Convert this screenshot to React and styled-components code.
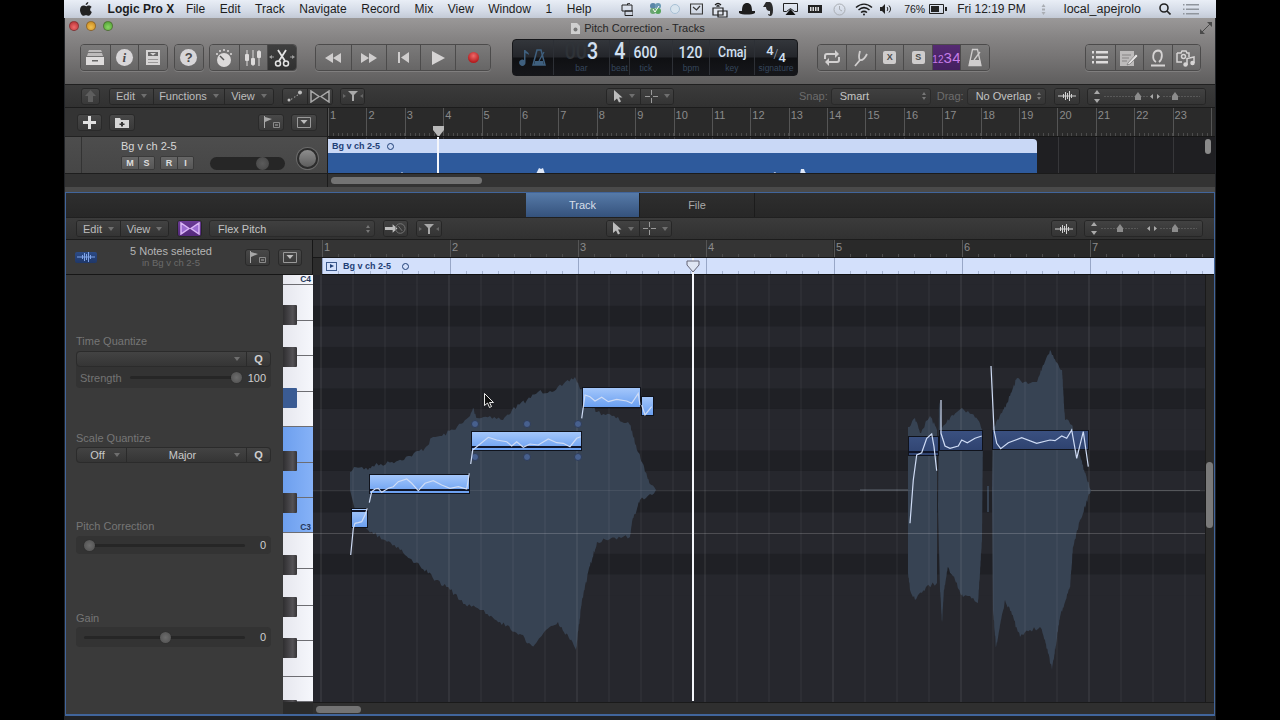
import React from 'react';
import styled, { createGlobalStyle } from 'styled-components';

const Global = createGlobalStyle`
  html, body { margin: 0; padding: 0; background: #000; overflow: hidden; }
  * { box-sizing: border-box; }
  body { font-family: "Liberation Sans", Arial, sans-serif; }
`;

/* ---------- page shell ---------- */
const Desktop = styled.div`
  width: 1152px; height: 720px; margin-left: 64px; background: #202226;
  display: flex; flex-direction: column; overflow: hidden;
`;
const MenuBar = styled.div`
  height: 18px; flex: none; display: flex; align-items: center; padding: 0 17px 0 16px; gap: 14.6px;
  background: linear-gradient(#e9eef6, #d4dbe7 60%, #c3cad6); color: #1c1c1c; font-size: 12px;
`;
const MenuTitle = styled.span`font-weight: 700; margin: 0 -3px 0 1px; font-size: 12px;`;
const Status = styled.div`margin-left: auto; display: flex; align-items: center;`;
const StatusText = styled.span`
  margin-left: ${p => p.$ml || 0}px; font-size: ${p => p.$size || 12}px; color: #222; white-space: nowrap;
`;
const Ico = styled.svg`display: block; flex: none; margin-left: ${p => p.$ml || 0}px;`;

const WindowTop = styled.div`
  height: 66px; flex: none; margin-left: 1px; margin-right: 1px;
  background: linear-gradient(#9a9898, #868484 30%, #767474 60%, #5f5e5e);
`;
const TitleBar = styled.div`height: 20px; position: relative; display: flex; align-items: center; justify-content: center; gap: 4px; padding-right: 4px; color: #262626; font-size: 11px;`;
const Lights = styled.div`position: absolute; left: 4px; top: 3px; display: flex; gap: 7px;`;
const Light = styled.span`
  width: 10px; height: 10px; border-radius: 50%; background: radial-gradient(circle at 50% 65%, ${p => p.$c}, ${p => p.$d});
  border: 1px solid rgba(60, 40, 40, .45);
`;
const Expand = styled(Ico)`position: absolute; right: 3px; top: 4px;`;
const Toolbar = styled.div`display: flex; align-items: flex-start; padding: 6px 14px 0 15px; height: 46px;`;
const Group = styled.div`
  display: flex; height: 27px; margin-left: ${p => p.$auto ? 'auto' : (p.$ml || 0) + 'px'}; border-radius: 4px; overflow: hidden;
  border: 1px solid #4c4b4b; box-shadow: 0 1px 0 rgba(255, 255, 255, .15);
`;
const ToolBtn = styled.div`
  width: ${p => p.$w || 28.5}px; display: flex; align-items: center; justify-content: center;
  background: ${p => p.$purple ? 'linear-gradient(#552a72, #43205f)' : p.$on ? 'linear-gradient(#3e3e3e, #303030)' : 'linear-gradient(#7b7a7a, #676666)'};
  & + & { border-left: 1px solid #4c4b4b; }
`;
const Disc = styled.span`
  width: 17px; height: 17px; border-radius: 50%; background: #d8d6d8; color: #4a484a; font: italic 700 13px/17px "Liberation Serif", serif; text-align: center;
`;
const DiscPlain = styled(Disc)`font: 700 13px/17px "Liberation Sans", sans-serif;`;
const Badge = styled.span`
  width: 13px; height: 13px; border-radius: 2px; background: #cfcdcd; color: #4d4d4d; font: 700 9px/13px "Liberation Sans", sans-serif; text-align: center;
`;
const CountIn = styled.span`color: #c67ce8; font-size: 10px; white-space: nowrap; b { font-weight: 400; font-size: 15px; letter-spacing: .5px; }`;
const RecordDot = styled.span`width: 11px; height: 11px; border-radius: 50%; background: radial-gradient(circle at 50% 35%, #f06a6a, #b51e20 70%);`;

/* ---------- LCD ---------- */
const Lcd = styled.div`
  width: 286px; height: 37px; margin: -5px 0 0 21px; display: flex; border-radius: 4px; border: 1px solid #16171a;
  background: linear-gradient(#33363b, #24262b 48%, #0f1013 52%, #15161a); color: #d2e0f2;
`;
const LcdCell = styled.div`
  width: ${p => p.$w}px; display: flex; flex-direction: column; align-items: center; justify-content: ${p => p.$center ? 'center' : 'flex-end'};
  padding: 0 ${p => p.$pr || 0}px ${p => p.$center ? 0 : 2}px 0;
  & + & { border-left: ${p => p.$flat ? 0 : 1}px solid #2d3036; }
`;
const LcdValue = styled.div`
  font: 500 ${p => p.$size || 17}px/${p => p.$size || 17}px Roboto, sans-serif; transform: scaleX(.82); white-space: nowrap; margin-bottom: ${p => p.$mb || 1}px;
  i { font-style: normal; color: #2f3338; }
`;
const Signature = styled.div`
  display: flex; height: 22px; align-items: center; font: 500 13px/13px Roboto, sans-serif; margin-bottom: -1px;
  span:first-child { transform: translateY(-4px); }
  span:last-child { transform: translateY(3px); }
  em { font-style: normal; font-weight: 300; font-size: 12px; color: #9fb0c6; }
`;
const LcdLabel = styled.div`font-size: 8.5px; line-height: 9px; color: #36475c;`;

/* ---------- dark bars ---------- */
const DarkBar = styled.div`
  height: ${p => p.$h || 24}px; flex: none; display: flex; align-items: center; padding-left: ${p => p.$pl || 0}px;
  background: linear-gradient(#3b3b3b, #313131); border-top: 1px solid #202020; border-bottom: 1px solid #1c1c1c;
`;
const BarGroup = styled.div`
  display: flex; flex: none; height: 17px; margin-left: ${p => p.$ml || 0}px; border-radius: 3px; overflow: hidden; border: 1px solid #262626;
`;
const BarBtn = styled.div`
  width: ${p => p.$w}px; display: flex; align-items: center; justify-content: center; gap: 6px; font-size: 11px; color: #bdbdbd;
  background: ${p => p.$purple ? 'linear-gradient(#6b3a96, #53297a)' : 'linear-gradient(#424242, #343434)'};
  & + & { border-left: 1px solid #262626; }
`;
const Caret = styled.span`
  width: 0; height: 0; border-left: 3px solid transparent; border-right: 3px solid transparent; border-top: 4px solid #6f6f6f;
`;
const Dim = styled.span`font-size: 11px; color: #6d6d6d; margin-left: ${p => p.$ml || 0}px;`;
const Select = styled.div`
  width: ${p => p.$w}px; flex: none; height: 17px; margin-left: ${p => p.$ml || 0}px; display: flex; align-items: center; justify-content: space-between;
  padding: 0 4px 0 8px; border-radius: 3px; border: 1px solid #2a2a2a; background: linear-gradient(#404040, #353535); font-size: 11px; color: #c4c4c4;
`;
const Stepper = styled.span`
  display: flex; flex-direction: column; gap: 2px;
  &::before, &::after { content: ''; width: 0; height: 0; border-left: 2.5px solid transparent; border-right: 2.5px solid transparent; }
  &::before { border-bottom: 3px solid #777; }
  &::after { border-top: 3px solid #777; }
`;

/* ---------- track pane ---------- */
const TrackPane = styled.div`height: 103px; flex: none; margin: 0 1px; background: #2b2b2b; display: flex; flex-direction: column;`;
const TrackGrid = styled.div`display: grid; grid-template-columns: 263px 1fr; grid-template-rows: 29px 37px 13px;`;
const HeaderTools = styled.div`display: flex; align-items: center; padding-left: 12px; background: #343434; border-right: 1px solid #1c1c1c; border-bottom: 1px solid #222;`;
const SquareBtn = styled.div`
  width: ${p => p.$w || 25}px; height: 17px; margin-left: ${p => p.$ml || 0}px; display: flex; align-items: center; justify-content: center;
  border-radius: 3px; border: 1px solid #2a2a2a; background: linear-gradient(#484848, #393939); flex: none;
`;
const RulerStrip = styled.div`
  display: flex; overflow: hidden; position: relative; padding-left: ${p => p.$pl || 0}px; min-width: 0;
  ${p => p.$h ? `height: ${p.$h}px; flex: none;` : ''}
  background: ${p => p.$bg || '#2a2a2a'}; border-bottom: 1px solid #171717;
`;
const Bar = styled.div`
  width: ${p => p.$w}px; flex: none; border-left: 1px solid #555; color: #8b8b8b; font-size: 11px; padding: 1px 0 0 1px; line-height: 12px;
  background: repeating-linear-gradient(90deg, transparent 0 ${p => p.$w / 8 - 1}px, #4b4b4b ${p => p.$w / 8 - 1}px ${p => p.$w / 8}px) 0 100% / 100% 3px no-repeat;
`;
const Lamp = styled.div`
  position: absolute; left: ${p => p.$x}px; top: ${p => p.$y}px; pointer-events: none;
`;
const TrackHead = styled.div`
  display: flex; background: linear-gradient(#4d4d4d, #464646); border-right: 1px solid #1c1c1c; border-bottom: 1px solid #1e1e1e;
`;
const TrackIconSlot = styled.div`width: 17px; border-right: 1px solid #333;`;
const TrackMain = styled.div`flex: 1; display: flex; align-items: flex-end; padding: 0 0 3px 39px; position: relative;`;
const TrackName = styled.div`position: absolute; left: 39px; top: 3px; font-size: 11px; color: #d8d8d8;`;
const MiniGroup = styled.div`display: flex; height: 14px; margin-left: ${p => p.$ml || 0}px; border-radius: 2px; border: 1px solid #3a3a3a; overflow: hidden;`;
const MiniBtn = styled.span`
  width: 16px; display: flex; align-items: center; justify-content: center; font: 700 9px "Liberation Sans", sans-serif; color: #dedede;
  background: linear-gradient(#676767, #565656);
  & + & { border-left: 1px solid #3a3a3a; }
`;
const Volume = styled.div`
  width: 75px; height: 13px; margin-left: 16px; border-radius: 7px; background: #262626; position: relative;
  &::after { content: ''; position: absolute; left: 46px; top: 0; width: 13px; height: 13px; border-radius: 50%; background: radial-gradient(#5b5b5b, #444); }
`;
const Pan = styled.div`
  width: 21px; height: 21px; margin: 0 0 1px 12px; border-radius: 50%; border: 2px solid #2c2c2c; background: linear-gradient(#8d8d8d, #5d5d5d);
  box-shadow: 0 0 0 1px #6a6a6a;
`;
const Lane = styled.div`
  position: relative; overflow: hidden; background: #1f1f22; padding-top: 2px; border-bottom: 1px solid #1b1b1b;
  background-image: repeating-linear-gradient(90deg, #37373a 0 1px, transparent 1px 38.4px);
  background-size: 875px 100%; background-repeat: no-repeat;
`;
const Region = styled.div`width: 709px; height: 35px; border-radius: 0 4px 0 0; overflow: hidden; display: flex; flex-direction: column;`;
const RegionHead = styled.div`
  height: 14px; flex: none; background: #c9d8f6; display: flex; align-items: center; gap: 7px; padding-left: 4px; font-size: 9px; font-weight: 700; color: #1f3f76;
`;
const Ring = styled.span`width: 7px; height: 7px; border-radius: 50%; border: 1px solid #1f3f76; margin-left: ${p => p.$ml || 0}px;`;
const RegionBody = styled.div`flex: 1; background: #2e5a9c;`;
const LaneThumb = styled.div`position: absolute; left: 877px; top: 2px; width: 6px; height: 15px; border-radius: 3px; background: #8a8a8a;`;
const PlayLine = styled.div`position: absolute; left: ${p => p.$x}px; top: ${p => p.$top}px; bottom: ${p => p.$bottom}px; width: 2px; background: #f4f6fb;`;
const ScrollCorner = styled.div`background: #333; border-right: 1px solid #1c1c1c;`;
const ScrollTrack = styled.div`background: #333; padding: 3px 0 0 3px;`;
const Thumb = styled.div`width: ${p => p.$w}px; height: 7px; border-radius: 4px; background: #737373;`;
const Divider = styled.div`height: 5px; flex: none; margin: 0 1px; background: #4a4a4a;`;

/* ---------- editor pane ---------- */
const Editor = styled.div`
  height: 524px; flex: none; margin: 0 1px; display: flex; flex-direction: column; border: 1px solid #41659b; border-bottom-width: 2px; background: #2c2c2c;
`;
const Tabs = styled.div`height: 24px; flex: none; display: flex; padding-left: 460px; background: linear-gradient(#2e2e2e, #272727);`;
const Tab = styled.div`
  width: ${p => p.$w}px; display: flex; align-items: center; justify-content: center; font-size: 11px; border-right: 1px solid #1c1c1c;
  color: ${p => p.$on ? '#d7dfe9' : '#a9a9a9'};
  background: ${p => p.$on ? 'linear-gradient(#567aa8, #35527c)' : 'transparent'};
`;
const EditorBody = styled.div`flex: 1; display: flex; min-height: 0;`;
const LeftCol = styled.div`width: 247px; flex: none; display: flex; flex-direction: column; border-right: 1px solid #161616;`;
const InspectorHead = styled.div`
  height: 35px; flex: none; display: flex; align-items: center; padding-left: 9px; background: #3a3a3a; border-bottom: 1px solid #161616;
`;
const BlueChip = styled.div`
  width: 22px; height: 11px; border-radius: 2px; display: flex; align-items: center; justify-content: center; background: linear-gradient(#2c4b86, #1f3768);
`;
const Selected = styled.div`width: 148px; text-align: center; font-size: 11px; line-height: 12px; color: #b5b5b5; small { display: block; font-size: 9.5px; color: #6b6b6b; }`;
const LeftBottom = styled.div`flex: 1; display: flex; min-height: 0;`;
const Inspector = styled.div`width: 217px; flex: none; padding-left: 10px; background: #3a3a3a; color: #767676; font-size: 11px;`;
const SectionLabel = styled.div`height: 12px; line-height: 12px; margin-top: ${p => p.$top}px; margin-bottom: ${p => p.$gap}px;`;
const Panel = styled.div`width: 195px; border-radius: 4px; background: #333;`;
const SelectRow = styled.div`
  display: flex; height: 16px; border-radius: 4px; overflow: hidden; border: 1px solid #2b2b2b; background: linear-gradient(#434343, #353535); color: #c9c9c9; font-size: 11px;
`;
const SelectCell = styled.div`
  flex: ${p => p.$flex || 'none'}; width: ${p => p.$w ? p.$w + 'px' : 'auto'}; display: flex; align-items: center; justify-content: center; padding-right: ${p => p.$pr || 0}px;
  position: relative;
  & + & { border-left: 1px solid #2b2b2b; }
`;
const CellCaret = styled(Caret)`position: absolute; right: 6px; top: 5px;`;
const Q = styled.b`font-size: 11px; color: #d0d0d0;`;
const SliderRow = styled.div`display: flex; align-items: center; height: ${p => p.$h}px; padding: 0 5px 0 4px; color: #747474; font-size: 11px;`;
const SliderTrack = styled.div`flex: 1; height: 3px; margin: 0 ${p => p.$mr || 8}px 0 ${p => p.$ml || 8}px; border-radius: 2px; background: #262626; position: relative;`;
const Knob = styled.span`
  position: absolute; left: ${p => p.$at}%; top: -4px; width: 11px; height: 11px; margin-left: -5px; border-radius: 50%; background: radial-gradient(#6d6d6d, #4e4e4e); box-shadow: 0 0 1px #222;
`;
const Value = styled.span`min-width: 18px; text-align: right; color: #cfcfcf; font-size: 11px;`;
const KeyCol = styled.div`width: 30px; flex: none; display: flex; flex-direction: column; background: #2b2b2b;`;
const Keys = styled.div`height: 427px; flex: none; position: relative; overflow: hidden;`;
const WhiteKey = styled.div`
  height: ${p => p.$h}px; border-bottom: 1px solid #6d6d72; display: flex; align-items: flex-end; justify-content: flex-end; padding-right: 2px;
  background: ${p => p.$blue ? 'linear-gradient(90deg, #6d9fee, #86b2f7)' : 'linear-gradient(90deg, #e6e7ee, #f6f7fc)'};
  font: 700 8.5px/9px "Liberation Sans", sans-serif; color: #26385c;
`;
const BlackKey = styled.div`
  position: absolute; left: 0; top: ${p => p.$top}px; width: 14px; height: 20px; border-radius: 0 1px 1px 0;
  background: ${p => p.$blue ? '#3a5b93' : 'linear-gradient(90deg, #2f2e30, #545256 70%, #343335)'};
`;
const RightCol = styled.div`flex: 1; min-width: 0; position: relative; display: flex; flex-direction: column;`;
const RegionStrip = styled.div`
  height: 17px; flex: none; margin-left: 9px; display: flex; align-items: center; gap: 6px; padding-left: 4px; position: relative; font-size: 9px; font-weight: 700; color: #1f3f76;
  border-bottom: 1px solid #111;
  background:
    repeating-linear-gradient(90deg, #98a7c7 0 1px, transparent 1px 128px) 0 0 / 100% 100% no-repeat,
    repeating-linear-gradient(90deg, #a7b5d2 0 1px, transparent 1px 16px) 0 100% / 100% 3px no-repeat,
    #d3e0fb;
`;
const PlayBox = styled.span`
  width: 11px; height: 9px; border: 1px solid #3d5a8c; display: flex; align-items: center; justify-content: center;
  &::after { content: ''; border-left: 4px solid #1f3f76; border-top: 2.5px solid transparent; border-bottom: 2.5px solid transparent; }
`;
const RollRow = styled.div`height: 427px; flex: none; display: flex;`;
const Roll = styled.div`width: 892px; flex: none; position: relative; overflow: hidden; background: #26272d;`;
const Canvas = styled.svg`position: absolute; inset: 0; display: block;`;
const Note = styled.div`
  position: absolute; left: ${p => p.$x - 313}px; top: ${p => p.$y - 275}px; width: ${p => p.$w}px; height: ${p => p.$h}px; border: 1.5px solid #10131c;
  background: ${p => p.$dim ? 'linear-gradient(#3a5080, #2f4370)' : 'linear-gradient(#a4c7fb, #6a9ff0)'};
  &::after {
    content: ''; display: ${p => p.$bar ? 'block' : 'none'}; position: absolute; left: 0; right: 0; height: 2px; background: #10162a;
    ${p => p.$bar === 'top' ? 'top: 1px;' : 'bottom: 2px;'}
  }
`;
const Cursor = styled.svg`position: absolute; left: ${484 - 313}px; top: ${393 - 275}px; display: block;`;
const RollSide = styled.div`flex: 1; position: relative; background: #2b2b2b; border-left: 1px solid #1a1a1a;`;
const RollThumb = styled.div`position: absolute; left: 0; top: 187px; width: 7px; height: 66px; border-radius: 4px; background: #7a7a7a;`;
const BottomScroll = styled.div`flex: 1; background: #2f2f2f; padding: 3px 0 0 3px; border-top: 1px solid #1a1a1a;`;

/* ---------- drawings ---------- */
const Tray = () => (
  <svg width="20" height="17" viewBox="0 0 20 17">
    <path d="M4 1h12l1 2H3zM3 4h14l1 3H2z" fill="#bdbbbb" />
    <path d="M1 8h18v8H1z" fill="#dedcdc" /><path d="M7 11h6v1.5H7z" fill="#666" />
  </svg>
);
const SmartBox = () => (
  <svg width="16" height="17" viewBox="0 0 16 17">
    <path d="M1 1h14v15H1z" fill="#d6d4d4" /><path d="M3 3h10v4H3z" fill="#6a6969" /><path d="M5 4h6l-3 2.5z" fill="#d6d4d4" />
    <path d="M3 10h10v1H3zM3 13h10v1H3z" fill="#9a9898" />
  </svg>
);
const KnobIcon = () => (
  <svg width="20" height="20" viewBox="0 0 20 20">
    <circle cx="10" cy="12" r="7" fill="#dcdada" /><path d="M10 12 6 8" stroke="#555" strokeWidth="1.5" />
    <g fill="#dcdada"><circle cx="3" cy="6" r="1" /><circle cx="6" cy="3" r="1" /><circle cx="10" cy="2" r="1" /><circle cx="14" cy="3" r="1" /><circle cx="17" cy="6" r="1" /></g>
  </svg>
);
const Mixer = () => (
  <svg width="20" height="20" viewBox="0 0 20 20" fill="#dcdada">
    <path d="M3.5 2h1v16h-1zM9.5 2h1v16h-1zM15.5 2h1v16h-1z" />
    <rect x="2" y="6" width="4" height="7" rx="1" /><rect x="8" y="10" width="4" height="7" rx="1" /><rect x="14" y="3" width="4" height="7" rx="1" />
  </svg>
);
const ScissorsIcon = () => (
  <svg width="26" height="20" viewBox="0 0 26 20" fill="none" stroke="#e2e2e2">
    <path d="M9 2l7 11M17 2l-7 11" strokeWidth="1.8" />
    <circle cx="9" cy="15.5" r="2.5" strokeWidth="1.5" /><circle cx="17" cy="15.5" r="2.5" strokeWidth="1.5" />
    <path d="M1 9h4M21 9h4" stroke="#9a9a9a" /><path d="M0 9l3-2v4zM26 9l-3-2v4z" fill="#9a9a9a" stroke="none" />
  </svg>
);
const Rewind = () => <svg width="16" height="10" viewBox="0 0 16 10" fill="#cfcdcd"><path d="M8 0v10L0 5zM16 0v10L8 5z" /></svg>;
const Forward = () => <svg width="16" height="10" viewBox="0 0 16 10" fill="#cfcdcd"><path d="M0 0v10l8-5zM8 0v10l8-5z" /></svg>;
const ToStart = () => <svg width="11" height="11" viewBox="0 0 11 11" fill="#cfcdcd"><path d="M0 0h2v11H0zM11 0v11L3 5.5z" /></svg>;
const Play = () => <svg width="14" height="14" viewBox="0 0 14 14"><path d="M1 0v14l13-7z" fill="#d6d4d4" /></svg>;
const LcdIcons = () => (
  <svg width="32" height="18" viewBox="0 0 32 18" fill="#3f607f">
    <path d="M7 1h1.5v12.5A3.2 3.2 0 1 1 7 11z" /><path d="M8 1c2 2 4 2 4 5-1-1-3-2-4-2z" />
    <path d="M20 1h4l4 15H16z" fill="none" stroke="#3f607f" strokeWidth="1.5" /><path d="M22 12 27 3" stroke="#3f607f" strokeWidth="1.3" /><path d="M18 12h8l1 4H17z" />
  </svg>
);
const Loop = () => (
  <svg width="18" height="16" viewBox="0 0 18 16" fill="none" stroke="#d2d0d0" strokeWidth="2">
    <path d="M2 9V6a2 2 0 0 1 2-2h9M16 7v3a2 2 0 0 1-2 2H5" /><path d="M12 0l4 4-4 4zM6 8l-4 4 4 4z" fill="#d2d0d0" stroke="none" />
  </svg>
);
const Fork = () => (
  <svg width="16" height="18" viewBox="0 0 16 18" fill="none" stroke="#cfcdcd" strokeWidth="1.8">
    <path d="M2 17l5-6M7 11c-2-2-1-5 0-9M7 11c3 1 5-2 7-6" />
  </svg>
);
const Metronome = ({ c = '#cfcdcd' }) => (
  <svg width="16" height="19" viewBox="0 0 16 19" fill="none" stroke={c} strokeWidth="1.3">
    <path d="M5.5 1.5h5l3.5 16H2z" /><path d="M3 12h10l1 5.5H2z" fill={c} stroke="none" /><path d="M7 12l6-8" />
  </svg>
);
const ListIcon = () => (
  <svg width="16" height="13" viewBox="0 0 16 13" fill="#dedcdc"><path d="M0 0h2v2.5H0zM4 0h12v2.5H4zM0 5h2v2.5H0zM4 5h12v2.5H4zM0 10h2v2.5H0zM4 10h12v2.5H4z" /></svg>
);
const NotePad = () => (
  <svg width="18" height="16" viewBox="0 0 18 16">
    <path d="M0 1h14v15H0z" fill="#bdbbbb" /><path d="M2 5h9M2 8h7M2 11h5" stroke="#858383" /><path d="M8 13l8-9 2 2-8 8-3 1z" fill="#e4e2e2" stroke="#555" strokeWidth=".5" />
  </svg>
);
const LoopO = () => (
  <svg width="16" height="18" viewBox="0 0 16 18" fill="none" stroke="#d6d4d4" strokeWidth="1.8">
    <path d="M6 13C2 11 2 2 8 1.5c5 0 5 8 1 11.5" /><path d="M1 16.5h14" />
  </svg>
);
const Media = () => (
  <svg width="20" height="18" viewBox="0 0 20 18" fill="none" stroke="#d6d4d4" strokeWidth="1.5">
    <path d="M1 4h4l1-2h4l1 2h2v4M1 4v9h5" /><circle cx="7.5" cy="7.5" r="2" />
    <path d="M11 16V9.5l7-1.5v6" /><circle cx="9.5" cy="15.5" r="1.5" fill="#d6d4d4" /><circle cx="16.5" cy="14" r="1.5" fill="#d6d4d4" />
  </svg>
);
const BowTie = ({ c = '#a8a8a8', fill = 'none' }) => (
  <svg width="20" height="13" viewBox="0 0 20 13" fill={fill} stroke={c} strokeWidth="1.5"><path d="M1 1v11l8-5.5zM19 1v11l-8-5.5z" /></svg>
);
const Curve = () => (
  <svg width="18" height="12" viewBox="0 0 18 12" fill="#bdbdbd"><circle cx="3" cy="10" r="1.5" /><circle cx="14" cy="2.5" r="2" /><path d="M5 9l1-.7.5.7-1 .7zM8 7l1-.7.5.7-1 .7zM10.5 5.3l1-.7.5.7-1 .7z" /></svg>
);
const Funnel = () => (
  <svg width="20" height="12" viewBox="0 0 20 12" fill="#a8a8a8"><path d="M5 1h10l-4 4v6H9V5z" /><path d="M0 4l3 2-3 2zM20 4l-3 2 3 2z" fill="#666" /></svg>
);
const Pointer = () => <svg width="10" height="13" viewBox="0 0 10 13"><path d="M1 0v11l3-2.5 2 4 2-1-2-4h3.500z" fill="#bdbdbd" /></svg>;
const Cross = () => <svg width="13" height="13" viewBox="0 0 13 13" stroke="#9a9a9a"><path d="M6.5 0v5M6.5 8v5M0 6.5h5M8 6.5h5" /></svg>;
const WaveGlyph = ({ c = '#d0d0d0' }) => (
  <svg width="18" height="10" viewBox="0 0 18 10" stroke={c} strokeWidth="1"><path d="M0 5h18M5.5 3v4M7.5 1v8M9.5 2v6M11.5 0v10M13.5 3v4" /></svg>
);
const FlagIcon = () => (
  <svg width="17" height="12" viewBox="0 0 17 12"><path d="M1 0h1v12H1zM2 1l7 2-7 3z" fill="#a8a8a8" /><path d="M10.5 6.5h6v5h-6z" fill="none" stroke="#8a8a8a" /><path d="M12 9h3" stroke="#aaa" /></svg>
);
const DropBox = () => (
  <svg width="14" height="11" viewBox="0 0 14 11"><path d="M.5.5h13v10H.5z" fill="none" stroke="#999" /><path d="M3.5 3h7L7 7z" fill="#bdbdbd" /></svg>
);
const Plus = () => <svg width="13" height="13" viewBox="0 0 13 13"><path d="M5 0h3v5h5v3H8v5H5V8H0V5h5z" fill="#e2e2e2" /></svg>;
const FolderPlus = () => (
  <svg width="14" height="11" viewBox="0 0 14 11"><path d="M0 1h5l1 2h8v8H0z" fill="#d6d6d6" /><path d="M6 5h2v1.5h1.5V8H8v1.5H6V8H4.500V6.500H6z" fill="#333" /></svg>
);
const Arrowed = () => (
  <svg width="24" height="13" viewBox="0 0 24 13"><path d="M1 5h8V2l5 4.500L9 11V8H1z" fill="#bdbdbd" /><circle cx="17" cy="6.500" r="5" fill="none" stroke="#777" /><path d="M15 4l4 5" stroke="#777" /></svg>
);
const Zooms = ({ a, b, end = 59 }) => (
  <svg width="115" height="15" viewBox="0 0 115 15">
    <path d="M8 1l3 4H5zM8 14l-3-4h6z" fill="#aaa" />
    <path d={`M15 7.500H${end}`} stroke="#585858" strokeDasharray="2 1" /><path d="M74 7.500h37" stroke="#585858" strokeDasharray="2 1" />
    <path d={`M${a} 3l3 4v4h-6V7z`} fill="#8c8c8c" /><path d={`M${b} 3l3 4v4h-6V7z`} fill="#8c8c8c" />
    <path d="M61 7.500l3-2.500v5zM71 7.500l-3-2.500v5z" fill="#aaa" />
  </svg>
);

/* seeded jitter so waveform edges stay the same on every render */
function jagged(points, amp = 2.3) {
  let seed = 7;
  const rnd = () => { seed = (seed * 16807) % 2147483647; return seed / 2147483647 - 0.5; };
  const out = [];
  points.forEach(([x, y], i) => {
    const next = points[i + 1];
    if (!next) { out.push([x, y]); return; }
    const n = Math.max(1, Math.round(Math.hypot(next[0] - x, next[1] - y) / 2.2));
    for (let s = 0; s < n; s++) {
      const t = s / n;
      out.push([x + (next[0] - x) * t, y + (next[1] - y) * t + (s ? rnd() * amp * 2 : 0)]);
    }
  });
  return 'M' + out.map(p => p[0].toFixed(1) + ' ' + p[1].toFixed(1)).join('L') + 'Z';
}

const waveLeft = [[350, 490], [350, 472], [354, 467], [362, 467], [368, 470], [372, 466], [392, 462], [410, 456], [425, 448], [433, 437], [442, 436], [463, 423], [470, 416], [473, 408], [477, 418], [490, 416], [503, 420], [512, 410], [527, 400], [538, 392], [550, 391], [562, 386], [575, 377], [579, 386], [590, 403], [597, 412], [612, 416], [630, 425], [636, 445], [642, 462], [650, 484], [656, 490], [650, 494], [640, 500], [632, 522], [630, 537], [610, 539], [597, 542], [590, 566], [582, 600], [576, 650], [570, 640], [558, 622], [546, 630], [532, 646], [520, 634], [500, 622], [482, 610], [465, 604], [450, 590], [436, 580], [420, 566], [400, 550], [385, 540], [368, 530], [355, 510]];
const waveA = [[908, 490], [908, 427], [915, 418], [920, 433], [930, 416], [937, 430], [937, 583], [926, 587], [915, 600], [910, 590], [908, 573]];
const waveB = [[938, 507], [939, 400], [942, 428], [952, 415], [962, 408], [972, 414], [978, 420], [983, 430], [982, 540], [978, 603], [970, 596], [963, 597], [955, 580], [948, 567], [944, 590], [942, 622], [940, 590]];
const waveC = [[992, 490], [993, 427], [1002, 413], [1010, 396], [1017, 378], [1028, 384], [1037, 382], [1043, 365], [1050, 350], [1056, 362], [1062, 370], [1065, 420], [1072, 425], [1080, 455], [1087, 480], [1091, 490], [1080, 520], [1073, 547], [1070, 587], [1060, 617], [1052, 670], [1045, 640], [1040, 627], [1030, 630], [1020, 637], [1012, 615], [1005, 600], [1000, 625], [996, 647], [993, 610]];

const from = (ox, oy, pts) => pts.map(([x, y]) => `${(ox + x / 3).toFixed(1)},${(oy + y / 3).toFixed(1)}`).join(' ');
const curves = [
  from(330, 340, [[62, 645], [70, 565], [75, 550], [85, 548], [95, 545], [105, 525], [112, 505]]),
  from(330, 340, [[118, 488], [125, 455], [135, 447], [145, 445], [155, 457], [175, 445], [190, 440], [205, 425], [230, 417], [245, 430], [265, 452], [285, 430], [310, 422], [335, 435], [360, 445], [385, 440], [410, 447], [418, 400]]),
  from(330, 340, [[422, 372], [428, 330], [440, 320], [475, 292], [500, 300], [530, 305], [545, 318], [560, 305], [580, 322], [600, 312], [625, 315], [655, 297], [680, 308], [700, 310], [720, 320], [740, 295], [752, 290]]),
  from(330, 340, [[755, 235], [765, 165], [780, 170], [795, 183], [815, 172], [835, 185], [860, 178], [890, 183], [905, 190], [925, 160], [930, 195]]),
  from(330, 340, [[935, 195], [945, 225], [965, 200]]),
  from(880, 340, [[90, 550], [100, 420], [110, 345], [125, 338], [140, 295], [155, 282], [162, 320], [170, 392]]),
  from(880, 340, [[183, 180], [183, 280], [195, 318], [210, 325], [235, 318], [245, 300], [262, 308], [285, 295], [305, 288]]),
  from(880, 340, [[333, 78], [342, 270], [350, 310], [362, 326], [385, 308], [425, 293], [470, 310], [510, 300], [525, 302], [545, 288], [560, 295], [575, 270], [590, 355], [610, 275], [625, 380]]),
];

const blackRow = [1, 3, 6, 8, 10];
const rows = Array.from({ length: 24 }, (_, i) => i);
const beats = Array.from({ length: 30 }, (_, i) => 321 + i * 32);

const whites = [
  { h: 10, label: 'C4' }, { h: 36 }, { h: 35 }, { h: 36 }, { h: 35 },
  { h: 36, blue: true }, { h: 35, blue: true }, { h: 35, blue: true, label: 'C3' },
  { h: 36 }, { h: 37 }, { h: 35 }, { h: 36 }, { h: 25 },
];
const blacks = [{ top: 30 }, { top: 72 }, { top: 113, blue: true }, { top: 176 }, { top: 218 }, { top: 280 }, { top: 322 }, { top: 363 }, { top: 425 }];

const notes = [
  { x: 351, y: 508, w: 17, h: 20, bar: 'top' },
  { x: 369, y: 474, w: 101, h: 20, bar: 'bottom' },
  { x: 471, y: 431, w: 111, h: 20, bar: 'bottom' },
  { x: 582, y: 387, w: 59, h: 21 },
  { x: 641, y: 396, w: 13, h: 20 },
  { x: 908, y: 436, w: 31, h: 20, dim: true, bar: 'bottom' },
  { x: 939, y: 430, w: 44, h: 21, dim: true },
  { x: 992, y: 430, w: 97, h: 20, dim: true },
];

function TopIcons() {
  return (
    <>
      <Ico width="12" height="13" viewBox="0 0 12 13"><path d="M1 2h10v6H1zM4 8h8v4.500H4z" fill="none" stroke="#222" /><path d="M6 0c1.500 0 3 .7 3 .7M6 1.500l1 0" stroke="#222" /></Ico>
      <Ico $ml={16} width="13" height="14" viewBox="0 0 13 14"><circle cx="4" cy="4" r="3" fill="#5a86a8" /><circle cx="9" cy="4" r="3" fill="#6b9ab5" /><circle cx="4" cy="9" r="3" fill="#6aa572" /><circle cx="9" cy="9" r="3" fill="#55a45a" /><path d="M4 7l2 3 4-6" stroke="#fff" fill="none" /></Ico>
      <Ico $ml={8} width="10" height="12" viewBox="0 0 10 12"><circle cx="5" cy="6" r="4.500" fill="#d8e4ee" stroke="#a8c0d4" /></Ico>
      <Ico $ml={10} width="13" height="12" viewBox="0 0 13 12" fill="none" stroke="#3a3a3a"><path d="M.5 1h12v10H.5zM3 4l3.500 3L10 3" strokeWidth="1.200" /></Ico>
      <Ico $ml={9} width="16" height="17" viewBox="0 0 16 17" fill="none" stroke="#1d1d1d" strokeWidth="1.200"><path d="M1 7h10v7H1zM6 10h9v6H6z" fill="#e2e6ee" /><path d="M3 4c2-2 4-2 6 0M4.500 5.500c1-1 2-1 3 0" /></Ico>
      <Ico $ml={11} width="16" height="12" viewBox="0 0 16 12" fill="#1d1d1d"><path d="M3 8C3 2 5 0 8 0s5 2 5 8h3v2c-3 2-13 2-16 0V8z" /></Ico>
      <Ico $ml={8} width="10" height="14" viewBox="0 0 10 14" fill="#2b2b2b"><path d="M3 0h4c2 1 3 4 3 8s-1 6-3 6c-1 0-2-1-2-2l2 .5V9C4 9 3 7 3 5L0 5z" /></Ico>
      <Ico $ml={10} width="15" height="12" viewBox="0 0 15 12"><path d="M.5.500h14v8h-3l-4-3-4 3h-3z" fill="none" stroke="#222" /><path d="M7.500 6l5 6h-10z" fill="#111" /></Ico>
      <Ico $ml={10} width="14" height="10" viewBox="0 0 14 10"><path d="M0 1h14v8H0z" fill="#222" /><path d="M2 3h1.500v4H2zM4.500 3H6v4H4.500zM7 3h1.500v4H7zM9.500 3H11v4H9.500z" fill="#ddd" /></Ico>
      <Ico $ml={11} width="13" height="13" viewBox="0 0 13 13" fill="none" stroke="#a9adb3"><circle cx="6.500" cy="6.500" r="5.500" /><path d="M6.500 3v3.500l2.500 1.500" /></Ico>
      <Ico $ml={9} width="18" height="13" viewBox="0 0 18 13" fill="none" stroke="#1b1b1b" strokeWidth="1.500"><path d="M1 4.500c5-4.500 11-4.500 16 0M3.500 7c3.500-3 7.500-3 11 0M6 9.500c2-1.500 4-1.500 6 0" /><circle cx="9" cy="11.500" r="1" fill="#1b1b1b" stroke="none" /></Ico>
      <Ico $ml={7} width="11" height="10" viewBox="0 0 11 10" fill="#222"><path d="M0 3h2l3-3v10L2 7H0z" /><path d="M7 3c1 1 1 3 0 4M9 1.500c2 2 2 5 0 7" fill="none" stroke="#222" /></Ico>
      <StatusText $ml={13} $size={10.5}>76%</StatusText>
      <Ico $ml={4} width="18" height="10" viewBox="0 0 18 10"><path d="M.5.500h14v9H.5z" fill="none" stroke="#222" /><path d="M2 2h8v6H2z" fill="#222" /><path d="M16 3h2v4h-2z" fill="#222" /></Ico>
      <StatusText $ml={10} $size={12}>Fri 12:19 PM</StatusText>
      <Ico $ml={15} width="5" height="11" viewBox="0 0 5 11" fill="#a9adb3"><path d="M2.500 0l2 3h-4zM2.500 11l-2-3h4zM1 4.500h3v2H1z" /></Ico>
      <StatusText $ml={18} $size={12.5}>local_apejrolo</StatusText>
      <Ico $ml={18} width="12" height="12" viewBox="0 0 12 12" fill="none" stroke="#222" strokeWidth="1.600"><circle cx="5" cy="5" r="4" /><path d="M8 8l3.500 3.500" /></Ico>
      <Ico $ml={12} width="16" height="11" viewBox="0 0 16 11" fill="#8f959d"><path d="M0 0h1.500v1.500H0zM3 0h13v1.500H3zM0 4.500h1.500V6H0zM3 4.500h13V6H3zM0 9h1.500v1.500H0zM3 9h13v1.500H3z" /></Ico>
    </>
  );
}

export default function App() {
  return (
    <Desktop>
      <Global />
      <MenuBar>
        <Ico width="12" height="14" viewBox="0 0 12 14" fill="#222"><path d="M8.300 0c.1 1.500-1.200 3-2.600 2.900C5.500 1.500 7 .1 8.300 0zM11.800 10c-.8 2-2 3.800-3.200 3.800-1 0-1.400-.6-2.600-.6s-1.700.6-2.600.6C1.900 13.800 0 10.600 0 7.900 0 5.100 1.800 3.600 3.500 3.600c1.100 0 2 .7 2.600.7s1.200-.8 2.600-.8c.6 0 2.100.1 3 1.500-2.300 1.400-1.800 4.100.1 5z" /></Ico>
        <MenuTitle>Logic Pro X</MenuTitle>
        <span>File</span><span>Edit</span><span>Track</span><span>Navigate</span><span>Record</span><span>Mix</span><span>View</span><span>Window</span><span>1</span><span>Help</span>
        <Status><TopIcons /></Status>
      </MenuBar>

      <WindowTop>
        <TitleBar>
          <Lights>
            <Light $c="#f06a6a" $d="#b02a2f" /><Light $c="#f2c04e" $d="#c4851c" /><Light $c="#8ad864" $d="#4b9a2f" />
          </Lights>
          <Ico width="9" height="11" viewBox="0 0 9 11"><path d="M0 0h6l3 3v8H0z" fill="#cfcfcf" /><circle cx="4.500" cy="6.500" r="2" fill="#777" /></Ico>
          Pitch Correction - Tracks
          <Expand width="12" height="12" viewBox="0 0 12 12" fill="#4a4a4a"><path d="M12 0v5L7 0zM0 12V7l5 5z" /><path d="M6 6l4-4M6 6l-4 4" stroke="#4a4a4a" /></Expand>
        </TitleBar>
        <Toolbar>
          <Group>
            <ToolBtn><Tray /></ToolBtn>
            <ToolBtn><Disc>i</Disc></ToolBtn>
            <ToolBtn><SmartBox /></ToolBtn>
          </Group>
          <Group $ml={6}><ToolBtn><DiscPlain>?</DiscPlain></ToolBtn></Group>
          <Group $ml={5}>
            <ToolBtn><KnobIcon /></ToolBtn>
            <ToolBtn><Mixer /></ToolBtn>
            <ToolBtn $on><ScissorsIcon /></ToolBtn>
          </Group>
          <Group $ml={18.5}>
            <ToolBtn $w={34.8}><Rewind /></ToolBtn>
            <ToolBtn $w={34.8}><Forward /></ToolBtn>
            <ToolBtn $w={34.8}><ToStart /></ToolBtn>
            <ToolBtn $w={34.8}><Play /></ToolBtn>
            <ToolBtn $w={34.8}><RecordDot /></ToolBtn>
          </Group>
          <Lcd>
            <LcdCell $w={40} $center><LcdIcons /></LcdCell>
            <LcdCell $w={56}><LcdValue $size={24} $mb={0}><i>00</i>3</LcdValue><LcdLabel>bar</LcdLabel></LcdCell>
            <LcdCell $w={20} $flat><LcdValue $size={24} $mb={0}>4</LcdValue><LcdLabel>beat</LcdLabel></LcdCell>
            <LcdCell $w={43} $flat $pr={10}><LcdValue $mb={3}>600</LcdValue><LcdLabel>tick</LcdLabel></LcdCell>
            <LcdCell $w={37}><LcdValue $mb={3}>120</LcdValue><LcdLabel>bpm</LcdLabel></LcdCell>
            <LcdCell $w={45}><LcdValue $size={15} $mb={4}>Cmaj</LcdValue><LcdLabel>key</LcdLabel></LcdCell>
            <LcdCell $w={43}><Signature><span>4</span><em>/</em><span>4</span></Signature><LcdLabel>signature</LcdLabel></LcdCell>
          </Lcd>
          <Group $ml={19}>
            <ToolBtn><Loop /></ToolBtn>
            <ToolBtn><Fork /></ToolBtn>
            <ToolBtn><Badge>X</Badge></ToolBtn>
            <ToolBtn><Badge>S</Badge></ToolBtn>
            <ToolBtn $purple><CountIn>12<b>34</b></CountIn></ToolBtn>
            <ToolBtn><Metronome /></ToolBtn>
          </Group>
          <Group $auto>
            <ToolBtn><ListIcon /></ToolBtn>
            <ToolBtn><NotePad /></ToolBtn>
            <ToolBtn><LoopO /></ToolBtn>
            <ToolBtn><Media /></ToolBtn>
          </Group>
        </Toolbar>
      </WindowTop>

      <TrackPane>
        <DarkBar $pl={16}>
          <SquareBtn $w={19}><Ico width="11" height="12" viewBox="0 0 11 12"><path d="M5.500 0L11 6H8v6H3V6H0z" fill="#5e5e5e" /></Ico></SquareBtn>
          <BarGroup $ml={9}>
            <BarBtn $w={43}>Edit<Caret /></BarBtn>
            <BarBtn $w={71}>Functions<Caret /></BarBtn>
            <BarBtn $w={49}>View<Caret /></BarBtn>
          </BarGroup>
          <BarGroup $ml={8}>
            <BarBtn $w={24}><Curve /></BarBtn>
            <BarBtn $w={25}><BowTie /></BarBtn>
          </BarGroup>
          <BarGroup $ml={7}><BarBtn $w={23}><Funnel /></BarBtn></BarGroup>
          <BarGroup $ml={241}>
            <BarBtn $w={33}><Pointer /><Caret /></BarBtn>
            <BarBtn $w={33}><Cross /><Caret /></BarBtn>
          </BarGroup>
          <Dim $ml={125}>Snap:</Dim>
          <Select $ml={3} $w={100}>Smart<Stepper /></Select>
          <Dim $ml={6}>Drag:</Dim>
          <Select $ml={3} $w={79}>No Overlap<Stepper /></Select>
          <BarGroup $ml={8}><BarBtn $w={24}><WaveGlyph /></BarBtn></BarGroup>
          <BarGroup $ml={7}><BarBtn $w={117}><Zooms a={49} b={86} /></BarBtn></BarGroup>
        </DarkBar>
        <TrackGrid>
          <HeaderTools>
            <SquareBtn><Plus /></SquareBtn>
            <SquareBtn $ml={7} $w={26}><FolderPlus /></SquareBtn>
            <SquareBtn $ml={123} $w={26}><FlagIcon /></SquareBtn>
            <SquareBtn $ml={7} $w={26}><DropBox /></SquareBtn>
          </HeaderTools>
          <RulerStrip>
            {Array.from({ length: 23 }, (_, i) => <Bar key={i} $w={38.4}>{i + 1}</Bar>)}
            <Bar $w={38.4} />
            <Lamp $x={105} $y={18}>
              <Ico width="11" height="11" viewBox="0 0 11 11"><path d="M0 0h11v4L5.500 11 0 4z" fill="#b9b9b9" /></Ico>
            </Lamp>
          </RulerStrip>
          <TrackHead>
            <TrackIconSlot />
            <TrackMain>
              <TrackName>Bg v ch 2-5</TrackName>
              <MiniGroup><MiniBtn>M</MiniBtn><MiniBtn>S</MiniBtn></MiniGroup>
              <MiniGroup $ml={5}><MiniBtn>R</MiniBtn><MiniBtn>I</MiniBtn></MiniGroup>
              <Volume />
              <Pan />
            </TrackMain>
          </TrackHead>
          <Lane>
            <Region>
              <RegionHead>Bg v ch 2-5 <Ring /></RegionHead>
              <RegionBody>
                <Ico width="709" height="21" viewBox="0 0 709 21" fill="#dfe8f8">
                  <path d="M72 21l2-2 2 2zM208 21l3-6 2 1 2-1 2 6zM444 21l3-2 2 2zM472 21l1-5 3 0 1 3 2 2z" />
                </Ico>
              </RegionBody>
            </Region>
            <PlayLine $x={109} $top={0} $bottom={0} />
            <LaneThumb />
          </Lane>
          <ScrollCorner />
          <ScrollTrack><Thumb $w={151} /></ScrollTrack>
        </TrackGrid>
      </TrackPane>
      <Divider />

      <Editor>
        <Tabs>
          <Tab $w={114} $on>Track</Tab>
          <Tab $w={115}>File</Tab>
        </Tabs>
        <DarkBar $h={23} $pl={10}>
          <BarGroup>
            <BarBtn $w={43}>Edit<Caret /></BarBtn>
            <BarBtn $w={48}>View<Caret /></BarBtn>
          </BarGroup>
          <BarGroup $ml={8}><BarBtn $w={23} $purple><BowTie c="#d9b4f5" fill="#9b6bd0" /></BarBtn></BarGroup>
          <Select $ml={7} $w={166}>Flex Pitch<Stepper /></Select>
          <BarGroup $ml={8}><BarBtn $w={23}><Arrowed /></BarBtn></BarGroup>
          <BarGroup $ml={8}><BarBtn $w={24}><Funnel /></BarBtn></BarGroup>
          <BarGroup $ml={164}>
            <BarBtn $w={32}><Pointer /><Caret /></BarBtn>
            <BarBtn $w={32}><Cross /><Caret /></BarBtn>
          </BarGroup>
          <BarGroup $ml={379}><BarBtn $w={24}><WaveGlyph /></BarBtn></BarGroup>
          <BarGroup $ml={7}><BarBtn $w={117}><Zooms a={34} b={89} end={52} /></BarBtn></BarGroup>
        </DarkBar>
        <EditorBody>
          <LeftCol>
            <InspectorHead>
              <BlueChip><WaveGlyph c="#7fa4e8" /></BlueChip>
              <Selected>5 Notes selected<small>in Bg v ch 2-5</small></Selected>
              <SquareBtn $w={25}><FlagIcon /></SquareBtn>
              <SquareBtn $w={24} $ml={8}><DropBox /></SquareBtn>
            </InspectorHead>
            <LeftBottom>
              <Inspector>
                <SectionLabel $top={60} $gap={4}>Time Quantize</SectionLabel>
                <Panel>
                  <SelectRow>
                    <SelectCell $flex="1"><CellCaret /></SelectCell>
                    <SelectCell $w={24}><Q>Q</Q></SelectCell>
                  </SelectRow>
                  <SliderRow $h={21}>
                    Strength
                    <SliderTrack $ml={8} $mr={12}><Knob $at={100} /></SliderTrack>
                    <Value>100</Value>
                  </SliderRow>
                </Panel>
                <SectionLabel $top={44} $gap={3}>Scale Quantize</SectionLabel>
                <Panel>
                  <SelectRow>
                    <SelectCell $w={49} $pr={8}>Off<CellCaret /></SelectCell>
                    <SelectCell $flex="1" $pr={8}>Major<CellCaret /></SelectCell>
                    <SelectCell $w={24}><Q>Q</Q></SelectCell>
                  </SelectRow>
                </Panel>
                <SectionLabel $top={57} $gap={4}>Pitch Correction</SectionLabel>
                <Panel>
                  <SliderRow $h={18}>
                    <SliderTrack $ml={9} $mr={3}><Knob $at={0} /></SliderTrack>
                    <Value>0</Value>
                  </SliderRow>
                </Panel>
                <SectionLabel $top={58} $gap={3}>Gain</SectionLabel>
                <Panel>
                  <SliderRow $h={20}>
                    <SliderTrack $ml={4} $mr={3}><Knob $at={50} /></SliderTrack>
                    <Value>0</Value>
                  </SliderRow>
                </Panel>
              </Inspector>
              <KeyCol>
                <Keys>
                  {whites.map((k, i) => <WhiteKey key={i} $h={k.h} $blue={k.blue}>{k.label}</WhiteKey>)}
                  {blacks.map(k => <BlackKey key={k.top} $top={k.top} $blue={k.blue} />)}
                </Keys>
              </KeyCol>
            </LeftBottom>
          </LeftCol>
          <RightCol>
            <RulerStrip $h={18} $pl={9} $bg="linear-gradient(90deg, #343434 0 520px, #292929 520px)">
              {Array.from({ length: 7 }, (_, i) => <Bar key={i} $w={128}>{i + 1}</Bar>)}
            </RulerStrip>
            <RegionStrip>
              <PlayBox />Bg v ch 2-5 <Ring $ml={5} />
            </RegionStrip>
            <RollRow>
              <Roll>
                <Canvas width="892" height="427" viewBox="313 275 892 427">
                  {rows.map(i => {
                    const y = 533 - (i - 3) * 20.67;
                    const dark = blackRow.includes(((i - 3) % 12 + 12) % 12);
                    return <rect key={i} x="313" y={y - 20.67} width="892" height="20.67" fill={dark ? '#1f2025' : '#26272d'} />;
                  })}
                  <path d={jagged(waveLeft)} fill="#374353" />
                  <path d={jagged(waveA)} fill="#374353" />
                  <path d={jagged(waveB)} fill="#374353" />
                  <path d={jagged(waveC)} fill="#374353" />
                  <path d="M987 486h2v26h-2z" fill="#374353" />
                  <path d="M860 489h48v2h-48z" fill="#41454d" />
                  {beats.map(x => <path key={x} d={`M${x} 275V702`} stroke="#fff" strokeOpacity={(x - 321) % 128 === 0 ? 0.13 : 0.07} />)}
                  <path d="M313 490.500H1205" stroke="#fff" strokeOpacity=".07" />
                  <path d="M1091 490.500H1200" stroke="#55575b" />
                  <path d="M313 533.500H1205" stroke="#fff" strokeOpacity=".18" />
                </Canvas>
                {notes.map(n => <Note key={n.x} $x={n.x} $y={n.y} $w={n.w} $h={n.h} $dim={n.dim} $bar={n.bar} />)}
                <Canvas width="892" height="427" viewBox="313 275 892 427">
                  {[475, 527, 578].flatMap(x => [424, 457].map(y => (
                    <circle key={`${x}-${y}`} cx={x} cy={y} r="3.5" fill="#47608e" stroke="#2f3d5a" />
                  )))}
                  {curves.map((c, i) => <polyline key={i} points={c} fill="none" stroke="#cfdcf5" strokeWidth="1.2" />)}
                </Canvas>
                <Cursor width="10" height="15" viewBox="0 0 10 15">
                  <path d="M.5.5v12l3-2.500 2 4.500 2-1-2-4h4z" fill="#111" stroke="#fff" strokeWidth=".9" />
                </Cursor>
              </Roll>
              <RollSide><RollThumb /></RollSide>
            </RollRow>
            <BottomScroll><Thumb $w={45} /></BottomScroll>
            <PlayLine $x={379} $top={18} $bottom={13} />
            <Lamp $x={373} $y={20}>
              <Ico width="14" height="13" viewBox="0 0 14 13"><path d="M1 1h12v4l-6 7-6-7z" fill="#dfe6f4" stroke="#667" /></Ico>
            </Lamp>
          </RightCol>
        </EditorBody>
      </Editor>
    </Desktop>
  );
}
